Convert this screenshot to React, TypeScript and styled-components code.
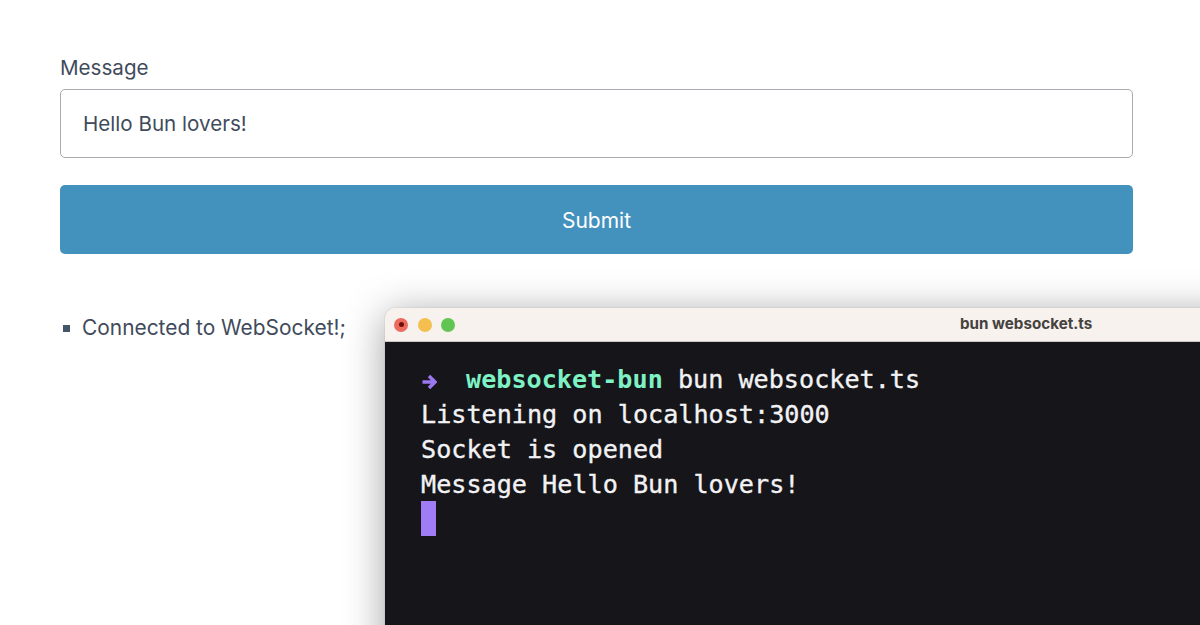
import React from 'react';
import styled, { createGlobalStyle } from 'styled-components';

const GlobalStyle = createGlobalStyle`
  html, body {
    margin: 0;
    padding: 0;
    background: #fff;
    overflow: hidden;
  }
`;

const Page = styled.div`
  position: relative;
  width: 1200px;
  height: 625px;
  overflow: hidden;
  box-sizing: border-box;
  padding: 54px 67px 0 60px;
  font-family: Inter, "Liberation Sans", sans-serif;
  color: #3f4b5b;
`;

const Label = styled.label`
  display: block;
  font-size: 20.6px;
  line-height: 28px;
  margin-bottom: 7px;
`;

const Input = styled.div`
  box-sizing: border-box;
  height: 69px;
  padding: 0 22px;
  display: flex;
  align-items: center;
  border: 1px solid #a9acb0;
  border-radius: 5px;
  font-size: 20.6px;
`;

const SubmitButton = styled.button`
  display: block;
  width: 100%;
  height: 69px;
  margin-top: 27px;
  padding: 2px 0 0;
  border: 0;
  border-radius: 5px;
  background: #4392bd;
  color: #fff;
  font-family: inherit;
  font-size: 21px;
`;

const Messages = styled.ul`
  list-style: none;
  margin: 60px 0 0;
  padding: 0;
`;

const MessageItem = styled.li`
  display: flex;
  align-items: center;
  gap: 12px;
  font-size: 20.9px;
  line-height: 28px;
  padding-left: 3px;

  &::before {
    content: '';
    width: 7px;
    height: 7px;
    background: #46566a;
  }
`;

const Terminal = styled.div`
  position: absolute;
  left: 385px;
  top: 308px;
  width: 900px;
  height: 400px;
  border-radius: 10px 0 0 0;
  overflow: hidden;
  box-shadow: 0 0 1px rgba(0, 0, 0, 0.4);
`;

const TerminalShadow = styled.div`
  position: absolute;
  left: 385px;
  top: 308px;
  width: 900px;
  height: 400px;
  border-radius: 10px 0 0 0;
  box-shadow: 0 6px 40px rgba(0, 0, 0, 0.38);
`;

const TitleBar = styled.div`
  position: relative;
  display: flex;
  align-items: center;
  gap: 9.5px;
  box-sizing: border-box;
  height: 34px;
  padding: 0 9px;
  background: #f7f2ee;
  border-bottom: 1px solid #c9c6c3;
`;

const Dot = styled.span<{ $color: string }>`
  display: block;
  width: 14px;
  height: 14px;
  border-radius: 50%;
  background: ${({ $color }) => $color};
`;

const CloseDot = styled(Dot)`
  display: flex;
  align-items: center;
  justify-content: center;

  &::after {
    content: '';
    width: 5px;
    height: 5px;
    border-radius: 50%;
    background: #6b0f0c;
  }
`;

const Title = styled.div`
  position: absolute;
  left: 575px;
  top: 0;
  line-height: 32px;
  font-family: Inter, "Liberation Sans", sans-serif;
  font-weight: 700;
  font-size: 15.2px;
  color: #46423f;
`;

const Screen = styled.div`
  box-sizing: border-box;
  height: 366px;
  padding: 20px 36px;
  background: #15151a;
  color: #f2f2f4;
  font-family: "DejaVu Sans Mono", "Liberation Mono", monospace;
  font-size: 25.15px;
  line-height: 35px;
  white-space: pre;
  -webkit-text-stroke: 0.35px #f2f2f4;
`;

const Line = styled.div``;

const Arrow = styled.svg`
  display: inline-block;
  width: 16px;
  height: 16px;
  margin-right: 29px;
  vertical-align: -2px;
`;

const Folder = styled.span`
  color: #7ef2c4;
  font-weight: 700;
  -webkit-text-stroke: 0;
`;

const Cursor = styled.div`
  width: 15px;
  height: 35px;
  margin: -1px 0 0 -0.5px;
  background: #a07cf7;
`;

export default function App() {
  return (
    <>
      <GlobalStyle />
      <Page>
        <Label>Message</Label>
        <Input>Hello Bun lovers!</Input>
        <SubmitButton>Submit</SubmitButton>
        <Messages>
          <MessageItem>Connected to WebSocket!;</MessageItem>
        </Messages>
        <TerminalShadow />
        <Terminal>
          <TitleBar>
            <CloseDot $color="#ec6a5e" />
            <Dot $color="#f5bf4f" />
            <Dot $color="#61c554" />
            <Title>bun websocket.ts</Title>
          </TitleBar>
          <Screen>
            <Line>
              <Arrow viewBox="0 0 16 16">
                <path d="M1.5 8H13.5M8 2L14 8L8 14" fill="none" stroke="#9c78f0" strokeWidth="3.4" />
              </Arrow>
              <Folder>websocket-bun</Folder> bun websocket.ts
            </Line>
            <Line>Listening on localhost:3000</Line>
            <Line>Socket is opened</Line>
            <Line>Message Hello Bun lovers!</Line>
            <Cursor />
          </Screen>
        </Terminal>
      </Page>
    </>
  );
}
